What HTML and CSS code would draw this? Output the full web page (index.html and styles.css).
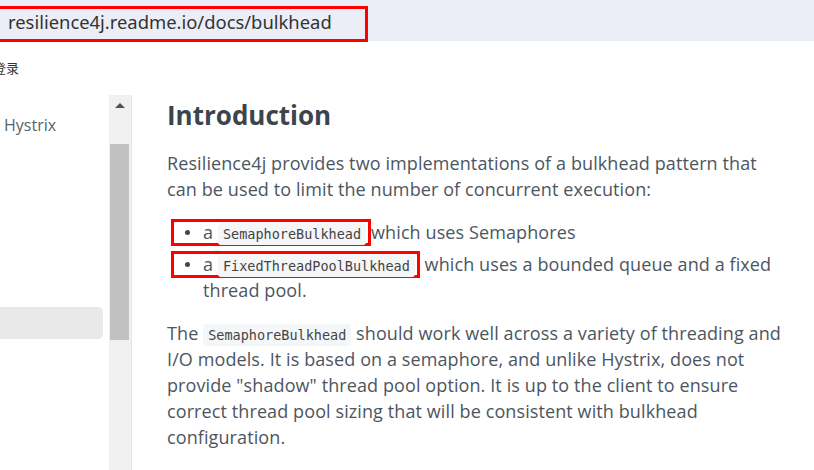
FILE: index.html
```html
<!DOCTYPE html>
<html lang="en">
<head>
<meta charset="utf-8">
<title>Bulkhead</title>
<link rel="stylesheet" href="styles.css">
</head>
<body>
<header class="urlbar">
  <span class="url">resilience4j.readme.io/docs/bulkhead</span>
</header>
<div class="loginrow"><span class="login">登录</span></div>
<div class="main">
  <nav class="sidebar">
    <div class="navitem">Hystrix</div>
    <div class="navitem active"></div>
  </nav>
  <div class="scrollbar">
    <div class="arrow"></div>
    <div class="thumb"></div>
  </div>
  <article class="content">
    <h1>Introduction</h1>
    <p>Resilience4j provides two implementations of a bulkhead pattern that can be used to limit the number of concurrent execution:</p>
    <ul>
      <li><span class="anno">a <code>SemaphoreBulkhead</code></span>which uses Semaphores</li>
      <li><span class="anno">a <code>FixedThreadPoolBulkhead</code></span> which uses a bounded queue and a fixed thread pool.</li>
    </ul>
    <p>The <code>SemaphoreBulkhead</code> should work well across a variety of threading and I/O models. It is based on a semaphore, and unlike Hystrix, does not provide "shadow" thread pool option. It is up to the client to ensure correct thread pool sizing that will be consistent with bulkhead configuration.</p>
  </article>
</div>
</body>
</html>
```
FILE: styles.css
```css
* { box-sizing: border-box; }
html, body { margin: 0; padding: 0; }
body {
  width: 814px;
  height: 470px;
  overflow: hidden;
  background: #fff;
  font-family: "Open Sans", "Noto Sans CJK SC", sans-serif;
  color: #4c5661;
}
.urlbar {
  height: 41px;
  background: #eceef7;
  padding-top: 6px;
}
.url {
  display: block;
  width: 378px;
  height: 36px;
  margin-left: -10px;
  padding-left: 15px;
  border: 3px solid #f00;
  font-size: 18.4px;
  line-height: 26px;
  color: #333;
  font-family: "Noto Sans", "Open Sans", sans-serif;
}
.loginrow {
  height: 54px;
  padding-top: 17px;
  font-size: 13px;
  color: #333;
  font-family: "Noto Sans CJK SC", sans-serif;
}
.login { margin-left: -7px; }
.main {
  display: flex;
  height: 375px;
}
.sidebar {
  width: 109px;
  padding-top: 18px;
}
.navitem {
  height: 24px;
  padding-left: 4px;
  font-size: 16px;
  line-height: 24px;
  color: #58626b;
}
.navitem.active {
  margin-top: 170px;
  width: 103px;
  height: 32px;
  background: #e9e9e9;
  border-radius: 0 5px 5px 0;
}
.scrollbar {
  width: 23px;
  background: #f0f0f0;
  border-right: 1px solid #e4e4e4;
  padding-left: 1px;
}
.arrow {
  width: 0;
  height: 0;
  margin: 8px 0 0 5px;
  border-left: 5px solid transparent;
  border-right: 5px solid transparent;
  border-bottom: 5px solid #505050;
}
.thumb {
  margin-top: 36px;
  width: 19px;
  height: 196px;
  background: #c1c1c1;
}
.content {
  flex: 1;
  padding: 2px 0 0 35px;
}
h1 {
  margin: 0 0 17px;
  font-size: 26px;
  line-height: 36px;
  font-weight: 700;
  color: #3b454e;
}
p, ul {
  font-size: 18px;
  letter-spacing: 0.1px;
  line-height: 26px;
  width: 620px;
}
p { margin: 0 0 17px; }
ul {
  margin: 17px 0 17px;
  padding: 0;
  list-style: none;
}
li {
  position: relative;
  padding-left: 36px;
  margin-bottom: 6px;
}
li::before {
  content: "";
  position: absolute;
  left: 18px;
  top: 11px;
  width: 5px;
  height: 5px;
  border-radius: 50%;
  background: #3e4852;
}
.anno {
  display: inline-block;
  height: 27px;
  margin: -2px 0 -2px -32px;
  line-height: 20px;
  border: 3px solid #f00;
  padding: 0 2px 0 29px;
}
code {
  font-family: "DejaVu Sans Mono", monospace;
  font-size: 13.5px;
  line-height: 1;
  letter-spacing: 0;
  background: #f5f6f8;
  border-radius: 3px;
  padding: 3px 5px;
  color: #444;
}
```
